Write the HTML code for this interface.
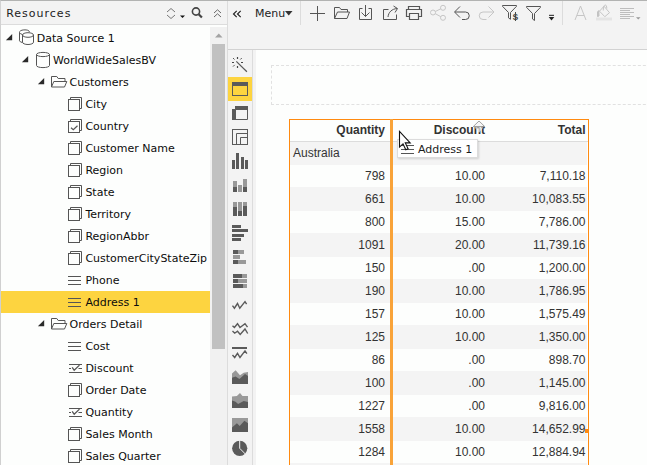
<!DOCTYPE html>
<html><head><meta charset="utf-8"><title>Resources</title>
<style>
html,body{margin:0;padding:0;}
body{width:647px;height:465px;overflow:hidden;position:relative;background:#fdfefd;font-family:"DejaVu Sans","Liberation Sans",sans-serif;font-size:11px;color:#1c1c1c;}
div,span{box-sizing:border-box}
#left{position:absolute;left:0;top:0;width:228px;height:465px;background:#fdfefd;border-left:1px solid #d0d0d0;border-right:1px solid #dcdcdc;}
#lhead{position:absolute;left:0;top:0;width:647px;height:25px;background:#f3f3f3;border-top:1px solid #b2b3b2;border-left:1px solid #d2d2d2;}
#lhead2{position:absolute;left:1px;top:24px;width:226px;height:1px;background:#dcdcdc;}
#title{position:absolute;left:6.2px;top:2px;height:24px;line-height:24px;letter-spacing:1px;color:#222;}
#track{position:absolute;left:210px;top:27px;width:17px;height:438px;background:#f1f1f1;}
#thumb{position:absolute;left:212px;top:44px;width:13px;height:305px;background:#c1c1c1;}
.tl{position:absolute;height:22px;line-height:22px;white-space:nowrap;color:#0c0c0c;}
#rtop{position:absolute;left:228px;top:1px;width:419px;height:48px;background:#f3f3f3;}
#rline{position:absolute;left:228px;top:49px;width:419px;height:1px;background:#d2d2d2;}
#vtool{position:absolute;left:228px;top:50px;width:28px;height:415px;background:#f3f3f3;}
#vline{position:absolute;left:252px;top:50px;width:1px;height:415px;background:#dcdcdc;}
#menu{position:absolute;left:255px;top:2px;height:24px;line-height:24px;color:#222;}
#dash{position:absolute;left:271px;top:65px;width:400px;height:40px;border:1px dashed #e1e1e1;}
#tbl{position:absolute;left:289px;top:119px;width:300px;height:360px;border:1px solid #ff8a10;background:#fdfefd;}
.tr{position:absolute;left:290px;width:297px;height:23px;font-family:"Liberation Sans",sans-serif;font-size:12px;line-height:23px;color:#333;}
.tr.g{background:#f4f4f4;}
.gb{position:absolute;left:290px;width:297px;height:24px;background:#f4f4f4;}
.tr.hd{font-weight:bold;border-bottom:0;line-height:21px;}
.c{position:absolute;top:0;text-align:right;white-space:nowrap}
.c.q{right:202px} .c.d{right:102px} .c.t{right:1.5px} .c.a{left:3px;text-align:left}
#hline{position:absolute;left:290px;top:141px;width:298px;height:1px;background:#dcdcdc;}
#drop{position:absolute;left:390px;top:119px;width:3px;height:346px;background:#f9a339;}
#tip{position:absolute;left:397px;top:139px;width:81px;height:19px;background:#fff;border:1px solid #dcdcdc;box-shadow:1px 1px 2px rgba(0,0,0,.15);}
#tiptx{position:absolute;left:418px;top:140px;height:19px;line-height:20px;color:#1c1c1c;}
svg{position:absolute;left:0;top:0;}
</style></head><body>
<div id="left"></div>
<div id="lhead"></div><div id="lhead2"></div>
<div id="title">Resources</div>
<div style="position:absolute;left:1px;top:291px;width:209px;height:22px;background:#fdd440"></div><div id="track"></div><div id="thumb"></div>
<div id="rtop"></div><div id="rline"></div><div id="vtool"></div><div id="vline"></div>
<div id="dash"></div>
<div id="tbl"></div>
<div class="tr hd" style="top:120px;height:21px"><span class="c q">Quantity</span><span class="c d">Discount</span><span class="c t">Total</span></div>
<div class="tr g" style="top:142px"><span class="c a">Australia</span></div>
<div class="tr" style="top:165px"><span class="c q">798</span><span class="c d">10.00</span><span class="c t">7,110.18</span></div>
<div class="gb" style="top:187px"></div>
<div class="tr" style="top:188px"><span class="c q">661</span><span class="c d">10.00</span><span class="c t">10,083.55</span></div>
<div class="tr" style="top:211px"><span class="c q">800</span><span class="c d">15.00</span><span class="c t">7,786.00</span></div>
<div class="gb" style="top:233px"></div>
<div class="tr" style="top:234px"><span class="c q">1091</span><span class="c d">20.00</span><span class="c t">11,739.16</span></div>
<div class="tr" style="top:257px"><span class="c q">150</span><span class="c d">.00</span><span class="c t">1,200.00</span></div>
<div class="gb" style="top:279px"></div>
<div class="tr" style="top:280px"><span class="c q">190</span><span class="c d">10.00</span><span class="c t">1,786.95</span></div>
<div class="tr" style="top:303px"><span class="c q">157</span><span class="c d">10.00</span><span class="c t">1,575.49</span></div>
<div class="gb" style="top:325px"></div>
<div class="tr" style="top:326px"><span class="c q">125</span><span class="c d">10.00</span><span class="c t">1,350.00</span></div>
<div class="tr" style="top:349px"><span class="c q">86</span><span class="c d">.00</span><span class="c t">898.70</span></div>
<div class="gb" style="top:371px"></div>
<div class="tr" style="top:372px"><span class="c q">100</span><span class="c d">.00</span><span class="c t">1,145.00</span></div>
<div class="tr" style="top:395px"><span class="c q">1227</span><span class="c d">.00</span><span class="c t">9,816.00</span></div>
<div class="gb" style="top:417px"></div>
<div class="tr" style="top:418px"><span class="c q">1558</span><span class="c d">10.00</span><span class="c t">14,652.99</span></div>
<div class="tr" style="top:441px"><span class="c q">1284</span><span class="c d">10.00</span><span class="c t">12,884.94</span></div>
<div class="gb" style="top:463px"></div>
<div id="hline"></div>
<div id="drop"></div>
<div id="tip"></div>
<div id="tiptx">Address 1</div>
<div class="tl" style="left:36.7px;top:28px">Data Source 1</div>
<div class="tl" style="left:53px;top:50px">WorldWideSalesBV</div>
<div class="tl" style="left:69.5px;top:72px">Customers</div>
<div class="tl" style="left:85.4px;top:94px">City</div>
<div class="tl" style="left:85.4px;top:116px">Country</div>
<div class="tl" style="left:85.4px;top:138px">Customer Name</div>
<div class="tl" style="left:85.4px;top:160px">Region</div>
<div class="tl" style="left:85.4px;top:182px">State</div>
<div class="tl" style="left:85.4px;top:204px">Territory</div>
<div class="tl" style="left:85.4px;top:226px">RegionAbbr</div>
<div class="tl" style="left:85.4px;top:248px">CustomerCityStateZip</div>
<div class="tl" style="left:85.4px;top:270px">Phone</div>
<div class="tl" style="left:85.4px;top:292px">Address 1</div>
<div class="tl" style="left:69.5px;top:314px">Orders Detail</div>
<div class="tl" style="left:85.4px;top:336px">Cost</div>
<div class="tl" style="left:85.4px;top:358px">Discount</div>
<div class="tl" style="left:85.4px;top:380px">Order Date</div>
<div class="tl" style="left:85.4px;top:402px">Quantity</div>
<div class="tl" style="left:85.4px;top:424px">Sales Month</div>
<div class="tl" style="left:85.4px;top:446px">Sales Quarter</div>
<div id="menu">Menu</div>
<svg width="647" height="465" viewBox="0 0 647 465">
<path d="M12.2 34 v6.3 h-6.3 z" fill="#2a2a2a"/>
<g transform="translate(19,27)" fill="none" stroke="#555" stroke-width="1">
<path d="M0.5 5.5 v8.3 q0.3 1.2 2.8 1.7 M0.5 5.5 a5 2.3 0 0 1 10 -0.6 M0.5 5.5 q0.5 1.5 3 2"/>
<path d="M3.5 8 a5.5 2.3 0 0 1 11 0 v7.200 a5.5 2.3 0 0 1 -11 0 z"/>
<path d="M3.5 8 a5.5 2.3 0 0 0 11 0"/>
</g>
<path d="M28.2 56 v6.3 h-6.3 z" fill="#2a2a2a"/>
<g transform="translate(36,49)" fill="none" stroke="#555" stroke-width="1">
<path d="M0.5 5.5 a6.5 2.1 0 0 1 13 0 v11 a6.5 2.1 0 0 1 -13 0 z"/>
<path d="M0.5 5.5 a6.5 2.1 0 0 0 13 0"/>
</g>
<path d="M44.2 78 v6.3 h-6.3 z" fill="#2a2a2a"/>
<g transform="translate(51,71)" fill="none" stroke="#555" stroke-width="1">
<path d="M0.5 16 V5.5 h5.3 l1.4 2 h6.8 v3"/>
<path d="M0.5 16 l2.3 -5.5 h13 l-2.3 5.5 z"/>
</g>
<g transform="translate(68,93)" fill="none" stroke="#555" stroke-width="1">
<rect x="0.5" y="6.5" width="11" height="11"/>
<path d="M2.5 6.5 v-2 h11 v11 h-2"/></g>
<g transform="translate(68,115)" fill="none" stroke="#555" stroke-width="1">
<rect x="0.5" y="6.5" width="11" height="11"/>
<path d="M2.5 6.5 v-2 h11 v11 h-2"/><path d="M3 12.7 l2.3 2 l4.2 -4" stroke-width="1.2"/></g>
<g transform="translate(68,137)" fill="none" stroke="#555" stroke-width="1">
<rect x="0.5" y="6.5" width="11" height="11"/>
<path d="M2.5 6.5 v-2 h11 v11 h-2"/></g>
<g transform="translate(68,159)" fill="none" stroke="#555" stroke-width="1">
<rect x="0.5" y="6.5" width="11" height="11"/>
<path d="M2.5 6.5 v-2 h11 v11 h-2"/></g>
<g transform="translate(68,181)" fill="none" stroke="#555" stroke-width="1">
<rect x="0.5" y="6.5" width="11" height="11"/>
<path d="M2.5 6.5 v-2 h11 v11 h-2"/></g>
<g transform="translate(68,203)" fill="none" stroke="#555" stroke-width="1">
<rect x="0.5" y="6.5" width="11" height="11"/>
<path d="M2.5 6.5 v-2 h11 v11 h-2"/></g>
<g transform="translate(68,225)" fill="none" stroke="#555" stroke-width="1">
<rect x="0.5" y="6.5" width="11" height="11"/>
<path d="M2.5 6.5 v-2 h11 v11 h-2"/></g>
<g transform="translate(68,247)" fill="none" stroke="#555" stroke-width="1">
<rect x="0.5" y="6.5" width="11" height="11"/>
<path d="M2.5 6.5 v-2 h11 v11 h-2"/></g>
<g transform="translate(68,269)" fill="none" stroke="#555" stroke-width="1">
<path d="M0 7.5 h13 M0 11.5 h13 M0 15.5 h13"/></g>
<g transform="translate(68,291)" fill="none" stroke="#555" stroke-width="1">
<path d="M0 7.5 h13 M0 11.5 h13 M0 15.5 h13"/></g>
<path d="M44.2 320 v6.3 h-6.3 z" fill="#2a2a2a"/>
<g transform="translate(51,313)" fill="none" stroke="#555" stroke-width="1">
<path d="M0.5 16 V5.5 h5.3 l1.4 2 h6.8 v3"/>
<path d="M0.5 16 l2.3 -5.5 h13 l-2.3 5.5 z"/>
</g>
<g transform="translate(68,335)" fill="none" stroke="#555" stroke-width="1">
<path d="M0 7.5 h13 M0 11.5 h13 M0 15.5 h13"/></g>
<g transform="translate(68,357)" fill="none" stroke="#555" stroke-width="1">
<path d="M1 7.5 h13 M1 11.5 h2 M10.5 11.5 h3.5 M1 15.5 h13"/><path d="M4.2 10.3 l2 3 l5.300 -5.200" stroke-width="1.3"/></g>
<g transform="translate(68,379)" fill="none" stroke="#555" stroke-width="1">
<rect x="0.5" y="6.5" width="11" height="11"/>
<path d="M2.5 6.5 v-2 h11 v11 h-2"/></g>
<g transform="translate(68,401)" fill="none" stroke="#555" stroke-width="1">
<path d="M1 7.5 h13 M1 11.5 h2 M10.5 11.5 h3.5 M1 15.5 h13"/><path d="M4.2 10.3 l2 3 l5.300 -5.200" stroke-width="1.3"/></g>
<g transform="translate(68,423)" fill="none" stroke="#555" stroke-width="1">
<rect x="0.5" y="6.5" width="11" height="11"/>
<path d="M2.5 6.5 v-2 h11 v11 h-2"/></g>
<g transform="translate(68,445)" fill="none" stroke="#555" stroke-width="1">
<rect x="0.5" y="6.5" width="11" height="11"/>
<path d="M2.5 6.5 v-2 h11 v11 h-2"/></g>
<!-- scrollbar arrow -->
<path d="M215 37.5 h7.5 l-3.75 -4 z" fill="#a3a3a3"/>
<!-- left header icons -->
<g fill="none" stroke="#777" stroke-width="1"><path d="M167 12 l4 -3.5 l4 3.5 M167 15 l4 3.5 l4 -3.5"/></g>
<path d="M180 15.5 h5 l-2.5 2.5 z" fill="#111"/>
<g fill="none" stroke="#444"><circle cx="196" cy="11.5" r="3.6" stroke-width="1.6"/><path d="M198.7 14.3 l3.2 3.2" stroke-width="2.2"/></g>
<g fill="none" stroke="#6a6a6a" stroke-width="1"><path d="M214 13 l3.5 -3.2 l3.5 3.2 M214 17 l3.5 -3.2 l3.5 3.2"/></g>
<!-- top toolbar -->
<g fill="none" stroke="#222" stroke-width="1.15"><path d="M236.7 10.8 l-3.2 3.2 l3.2 3.2 M240.7 10.8 l-3.2 3.2 l3.2 3.2"/></g>
<path d="M285 11 h7.5 l-3.75 4.5 z" fill="#333"/>
<rect x="300" y="1" width="1" height="24" fill="#dcdcdc"/><rect x="227" y="1" width="1" height="24" fill="#dcdcdc"/>
<rect x="562" y="1" width="1" height="24" fill="#dcdcdc"/>
<g fill="none" stroke="#555" stroke-width="1">
<path d="M310 13.5 h15 M317.5 6 v15"/>
<path d="M334.5 18.5 v-11 h5 l1.5 2 h6.5 v2.5 M334.5 18.5 l3 -6.5 h12 l-2.5 6.500 z"/>
<path d="M362.500 8.500 h-3 v11 h12 v-11 h-3 M365.500 5 v11.500 M361.500 12.500 l4 4 l4 -4"/>
<path d="M388.500 9.500 h-5 v10 h13 v-5 M388 17 c0.500 -5 4 -8 9 -8.500 M393.500 6 l4 2.500 l-2.500 4"/>
<path d="M408.500 9.500 v-3 h11 v3 M409 16.500 h-2.500 v-7 h15 v7 h-2.500 M409.500 13.500 h9 v6 h-9 z" stroke-width="1.2"/>
<path d="M455 12 h10.500 a3.750 3.750 0 0 1 0 7.500 h-3.500 M460 6.500 l-5.500 5.500 l5.500 5.500"/>
<path d="M502.500 5.500 h14 v0.800 l-6 6.200 v6.800 l-2 -1.400 v-5.400 l-6 -6.200 z"/>
<path d="M526.500 6.500 h14 v0.800 l-6 6.200 v7 l-2 -1.500 v-5.500 l-6 -6.200 z"/>
</g>
<g fill="none" stroke="#c6c6c6" stroke-width="1">
<circle cx="433" cy="12.500" r="2.500"/><circle cx="443" cy="7.800" r="2.500"/><circle cx="443" cy="17.800" r="2.500"/><path d="M435.300 11.500 l5.500 -2.700 M435.300 13.700 l5.500 3"/>
<path d="M493.500 12 h-10.500 a3.750 3.750 0 0 0 0 7.500 h3.500 M488.500 6.500 l5.500 5.500 l-5.500 5.500"/>
<path d="M575 20 l5.500 -14 l5.500 14 M577 15.500 h7"/>
<path d="M599.500 11.200 l4.500 -5 l5.500 6.500 l-4.700 4 z M603.300 10.500 c0 -7 3.500 -7 3.500 -2"/>
<path d="M598.800 10.500 l-1.300 1.500 v4.500 l1.500 -0.500 z" fill="#c2c2c2" stroke="#c2c2c2"/>
<path d="M596 19 h16" stroke-width="3" stroke="#e4e4e4"/>
<path d="M620 8.500 h14 M620 10.500 h10 M620 12.500 h14 M620 14.500 h10 M620 16.500 h14 M620 18.500 h10" stroke="#bdbdbd"/>
</g>
<path d="M636 17.300 h4.500 l-2.250 2.200 z" fill="#999"/>
<rect x="512" y="12" width="7" height="9" fill="#f3f3f3"/><text x="512.800" y="19.800" font-family="Liberation Sans, sans-serif" font-size="9.500" font-weight="bold" fill="#4a4a4a">$</text><rect x="515" y="12" width="1" height="9" fill="#4a4a4a"/>
<rect x="549" y="14.800" width="5" height="1.100" fill="#333"/><path d="M548.700 17 h5.600 l-2.800 3.600 z" fill="#222"/>
<!-- vertical tool icons -->
<g stroke="#5a5a5a" stroke-width="1.25" fill="none"><path d="M236.3 61.4 L246.9 71.7"/></g>
<g stroke="#444" stroke-width="1.2" fill="none"><path d="M237.5 57 v2 M237.5 66 v2 M232 62.5 h2 M241 62.5 h2"/><path d="M233 58 l1.5 1.5 M241.8 58 l-1.5 1.5 M233 66.6 l1.7 -1.7" stroke-width="0.9"/></g>
<rect x="228" y="77" width="24" height="24" fill="#fdd440"/>
<rect x="232.5" y="82.5" width="15" height="13" fill="none" stroke="#5a5a5a"/><rect x="232" y="82" width="16" height="4" fill="#5a5a5a"/>
<rect x="235" y="106" width="13" height="4" fill="#5a5a5a"/><rect x="232" y="109" width="4" height="11" fill="#5a5a5a"/><path d="M247.5 110 v9.5 h-11.5" fill="none" stroke="#5a5a5a"/>
<g fill="none" stroke="#5a5a5a"><rect x="232.5" y="129.5" width="15" height="15"/><path d="M236.5 144.5 v-11 h11"/><path d="M240.5 144.5 v-7 h7"/></g>
<rect x="232" y="160" width="3" height="9" fill="#5a5a5a"/><rect x="236" y="153" width="3" height="16" fill="#5a5a5a"/><rect x="241" y="157" width="3" height="12" fill="#5a5a5a"/><rect x="245" y="160" width="3" height="9" fill="#5a5a5a"/>
<rect x="233" y="181" width="4" height="6" fill="#999"/><rect x="233" y="187" width="4" height="5" fill="#5a5a5a"/><rect x="238" y="185" width="4" height="7" fill="#999"/><rect x="243" y="179" width="4" height="8" fill="#999"/><rect x="243" y="187" width="4" height="5" fill="#5a5a5a"/>
<rect x="233" y="202" width="4" height="5" fill="#999"/><rect x="233" y="207" width="4" height="9" fill="#5a5a5a"/><rect x="238" y="202" width="4" height="9" fill="#999"/><rect x="238" y="211" width="4" height="5" fill="#5a5a5a"/><rect x="243" y="202" width="4" height="4" fill="#999"/><rect x="243" y="206" width="4" height="10" fill="#5a5a5a"/>
<rect x="232" y="225" width="9" height="3" fill="#5a5a5a"/><rect x="232" y="229" width="16" height="3" fill="#5a5a5a"/><rect x="232" y="234" width="12" height="3" fill="#5a5a5a"/><rect x="232" y="238" width="9" height="3" fill="#5a5a5a"/>
<rect x="233" y="250" width="5" height="4" fill="#5a5a5a"/><rect x="238" y="250" width="6" height="4" fill="#999"/><rect x="233" y="255" width="7" height="4" fill="#999"/><rect x="233" y="260" width="5" height="4" fill="#5a5a5a"/><rect x="238" y="260" width="8" height="4" fill="#999"/>
<rect x="233" y="274" width="9" height="4" fill="#5a5a5a"/><rect x="242" y="274" width="5" height="4" fill="#999"/><rect x="233" y="279" width="5" height="4" fill="#5a5a5a"/><rect x="238" y="279" width="9" height="4" fill="#999"/><rect x="233" y="284" width="10" height="4" fill="#5a5a5a"/><rect x="243" y="284" width="4" height="4" fill="#999"/>
<polyline points="232.5,305.7 234.4,308.2 237.5,303.5 239.8,308.2 245,301.6 246.6,304.1" fill="none" stroke="#5a5a5a" stroke-width="1.4"/>
<polyline points="232.5,325.7 234.4,327.5 237.5,323.7 240,327.5 245,323.7 247.5,327.2" fill="none" stroke="#5a5a5a" stroke-width="1.4"/>
<polyline points="232.5,331 234.7,333.2 237.5,331.2 240.2,334.5 245,329 247.7,333.5" fill="none" stroke="#5a5a5a" stroke-width="1.4"/>
<rect x="232" y="347" width="15" height="2" fill="#5a5a5a"/><polyline points="232.5,355 234.7,357.5 237.5,353.4 240,357.5 245,350.9 246.9,353.7" fill="none" stroke="#5a5a5a" stroke-width="1.4"/>
<polygon points="232,373.4 235.6,370.2 240,375.2 243.7,372.7 248,372.1 248,384 232,384" fill="#999"/><polygon points="232,377.7 235.6,376.5 239.4,379 245,374 248,375.9 248,384 232,384" fill="#5a5a5a"/>
<polygon points="232,396.4 236.9,396 240,393 242.5,396 248,396 248,408 232,408" fill="#999"/><polygon points="232,400.5 235.6,401.7 238.1,403.9 243.7,401 248,402 248,408 232,408" fill="#5a5a5a"/>
<rect x="232" y="418" width="16" height="14" fill="#999"/><polygon points="232,427.6 236.9,423.2 239.7,426 244.4,420.7 248,423.2 248,432 232,432" fill="#5a5a5a"/>
<circle cx="239.7" cy="448.3" r="7.6" fill="#5a5a5a"/><path d="M239.7 440 V448.3 L245.5 454.2" fill="none" stroke="#f3f3f3" stroke-width="1"/>
<!-- tip icon -->
<g fill="none" stroke="#555"><path d="M401 145.500 h13 M401 149.500 h13 M401 153.500 h13"/></g>
<!-- sort ghost icon -->
<path d="M473.300 126.500 L479 121 L484.700 126.500 Z" fill="#f7f7f7" stroke="#8c8c8c" stroke-width="0.800"/>
<path d="M474.500 127.300 L483.500 127.300 L479 132.800 Z" fill="#ececec" opacity=".75"/>
<!-- cursor -->
<path d="M399.500 131.300 v15.800 l3.500 -3.300 l2.800 6 l2.300 -1 l-2.800 -5.900 h4.900 z" fill="#fff" stroke="#111" stroke-width="1.100" stroke-linejoin="miter"/>
<!-- small orange marker -->
<rect x="585" y="429" width="4" height="4" fill="#ff8a10"/>
</svg>
</body></html>
